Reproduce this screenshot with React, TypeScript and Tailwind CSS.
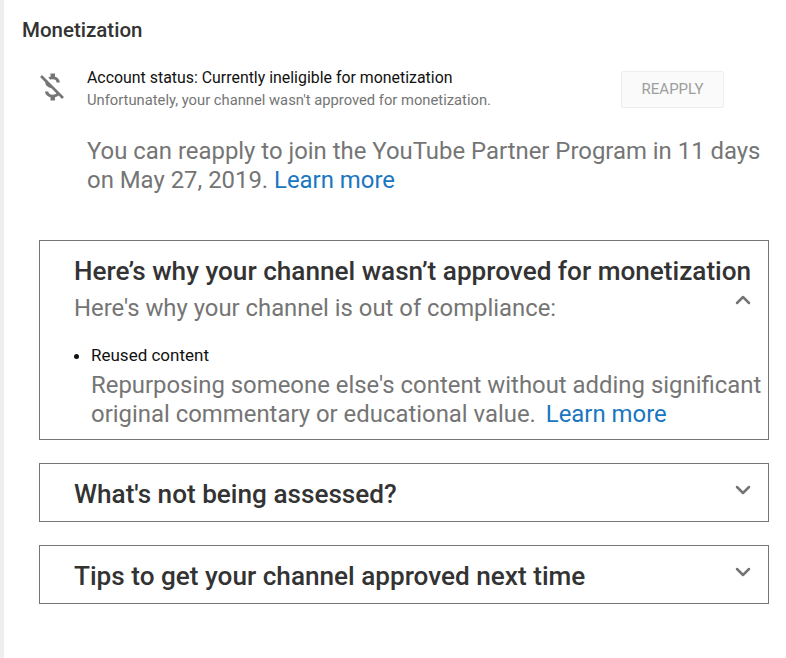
import { ChevronDown, ChevronUp } from "lucide-react";

const MoneyOff = () => (
  <svg viewBox="0 0 24 24" className="w-[36px] h-[36px] fill-[#757575]">
    <path d="M12.5 6.9c1.78 0 2.44.85 2.5 2.1h2.21c-.07-1.72-1.12-3.3-3.21-3.81V3h-3v2.16c-.53.12-1.03.3-1.48.54l1.47 1.47c.41-.17.91-.27 1.51-.27zM5.33 4.06L4.06 5.33 7.5 8.77c0 2.08 1.56 3.21 3.91 3.91l3.51 3.51c-.34.48-1.05.91-2.42.91-2.06 0-2.87-.92-2.98-2.1h-2.2c.12 2.19 1.76 3.42 3.68 3.83V21h3v-2.15c.96-.18 1.83-.55 2.46-1.12l2.22 2.22 1.27-1.27L5.33 4.06z" />
  </svg>
);

const Collapsed = ({ title }: { title: string }) => (
  <div className="h-[59px] border border-[#757575] pl-[34px] pr-[13px] flex items-center justify-between">
    <h2 className="text-[26.15px] font-medium text-[#333333] leading-[32px] mt-[3px]">{title}</h2>
    <ChevronDown className="w-[24px] h-[24px] text-[#757575] mb-[6px]" strokeWidth={2.5} />
  </div>
);

export default function App() {
  return (
    <div className="w-[786px] h-[658px] bg-white flex overflow-hidden font-['Roboto',sans-serif]">
      <div className="w-[4px] bg-[#eeeeee] shrink-0" />
      <div className="flex-1 pl-[18px] pt-[18px]">
        <h1 className="text-[20.5px] font-medium leading-[24px] text-[#333333]">Monetization</h1>

        <div className="flex mt-[27px] ml-[12px]">
          <div className="w-[53px]">
            <MoneyOff />
          </div>
          <div className="w-[534px]">
            <div className="text-[15.9px] leading-[20px] text-[#111111] mt-[-1px]">Account status: Currently ineligible for monetization</div>
            <div className="text-[14.75px] leading-[20px] text-[#757575] mt-[2px]">Unfortunately, your channel wasn't approved for monetization.</div>
          </div>
          <button className="w-[103px] h-[37px] mt-[2px] border border-[#eeeeee] bg-[#fafafa] text-[15px] text-[#9e9e9e] rounded-[2px]">
            REAPPLY
          </button>
        </div>

        <p className="ml-[65px] mt-[27px] w-[690px] text-[23.9px] leading-[29px] text-[#757575]">
          You can reapply to join the YouTube Partner Program in 11 days
          <br />
          on May 27, 2019. <span className="text-[#1976c0]">Learn more</span>
        </p>

        <div className="ml-[17px] w-[730px] mt-[45px] flex flex-col gap-[23px]">
          <div className="h-[200px] border border-[#757575] pl-[34px] pt-[14px] relative">
            <h2 className="text-[26.15px] font-medium text-[#333333] leading-[32px] whitespace-nowrap">
              Here’s why your channel wasn’t approved for monetization
            </h2>
            <div className="text-[23.85px] leading-[36px] text-[#757575] mt-[3px]">Here's why your channel is out of compliance:</div>
            <ChevronUp className="absolute right-[13px] top-[47px] w-[24px] h-[24px] text-[#757575]" strokeWidth={2.5} />
            <ul className="mt-[19px] pl-[17px] list-disc">
              <li className="text-[17px] leading-[20px] text-[#111111]">Reused content</li>
            </ul>
            <p className="pl-[17px] text-[23.9px] leading-[29px] text-[#757575] whitespace-nowrap mt-[6px]">
              Repurposing someone else's content without adding significant
              <br />
              original commentary or educational value. <span className="text-[#1976c0] ml-[4px]">Learn more</span>
            </p>
          </div>
          <Collapsed title="What's not being assessed?" />
          <Collapsed title="Tips to get your channel approved next time" />
        </div>
      </div>
    </div>
  );
}
